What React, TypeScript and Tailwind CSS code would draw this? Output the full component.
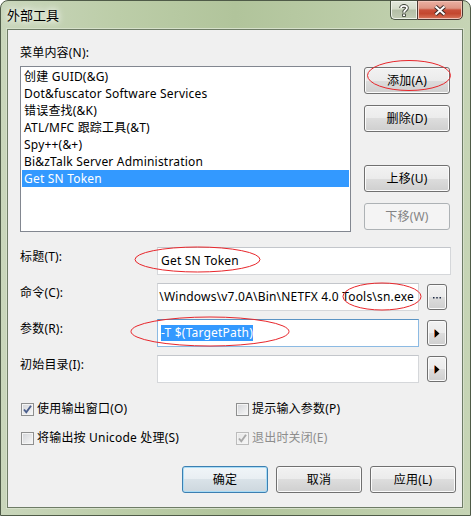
import React from "react";

const menuItems = [
  "创建 GUID(&G)",
  "Dot&fuscator Software Services",
  "错误查找(&K)",
  "ATL/MFC 跟踪工具(&T)",
  "Spy++(&+)",
  "Bi&zTalk Server Administration",
  "Get SN Token",
];

function Btn({
  children,
  className = "",
  disabled = false,
  isDefault = false,
}: {
  children: React.ReactNode;
  className?: string;
  disabled?: boolean;
  isDefault?: boolean;
}) {
  let look =
    "border-[#707070] bg-[linear-gradient(#f2f2f2_0%,#ebebeb_50%,#dddddd_50%,#cfcfcf_100%)] shadow-[inset_0_0_0_1px_#fbfbfb] text-black";
  if (disabled)
    look = "border-[#adb2b5] bg-[#f4f4f4] text-[#838383]";
  if (isDefault)
    look =
      "border-[#3c7fb1] bg-[linear-gradient(#f0f5f8_0%,#e8eef2_50%,#d9e2e8_50%,#cdd7de_100%)] shadow-[inset_0_0_0_1px_#a9dcf6] text-black";
  return (
    <div
      className={`flex h-[27px] w-[86px] items-center justify-center rounded-[3px] border ${look} ${className}`}
    >
      {children}
    </div>
  );
}

function SmallBtn({ children }: { children: React.ReactNode }) {
  return (
    <div className="ml-[8px] mt-[1px] flex h-[26px] w-[20px] items-center justify-center rounded-[3px] border border-[#707070] bg-[linear-gradient(#f2f2f2_0%,#ebebeb_50%,#dddddd_50%,#cfcfcf_100%)] shadow-[inset_0_0_0_1px_#fbfbfb]">
      {children}
    </div>
  );
}

function Arrow() {
  return (
    <svg width="6" height="9" viewBox="0 0 6 9">
      <path d="M1 0.5 L5.5 4.5 L1 8.5 Z" fill="#000" />
      <path d="M0.5 0.5 L0.5 8.5" stroke="#c8642a" strokeWidth="1" />
    </svg>
  );
}

function Row({ label, children }: { label: string; children: React.ReactNode }) {
  return (
    <div className="flex h-[28px] items-start">
      <div className="w-[137px] pt-[2px] whitespace-nowrap">{label}</div>
      {children}
    </div>
  );
}

function CheckBox({ checked = false, disabled = false }: { checked?: boolean; disabled?: boolean }) {
  return (
    <span
      className={`relative flex h-[13px] w-[13px] shrink-0 items-center justify-center border ${
        disabled
          ? "border-[#bcbcbc] bg-[linear-gradient(135deg,#e6e6e6,#f7f7f7)]"
          : "border-[#8e8f8f] bg-[linear-gradient(135deg,#d2d4d8,#f8f8f8)]"
      } shadow-[inset_0_0_0_1px_#f4f4f4]`}
    >
      {checked && (
        <svg width="11" height="11" viewBox="0 0 11 11">
          <path
            d="M2 5.5 L4.3 8.3 L9 1.8"
            fill="none"
            stroke={disabled ? "#a8a8a8" : "#4a5e8c"}
            strokeWidth="1.9"
          />
        </svg>
      )}
    </span>
  );
}

export default function App() {
  return (
    <div className="relative h-[516px] w-[471px] overflow-hidden bg-white font-['Noto_Sans','Noto_Sans_CJK_SC',sans-serif] text-[12px] leading-[16px] tracking-[0.2px] text-black">
      <div className="flex h-full flex-col rounded-t-[8px] border border-[#4f5b48] bg-[linear-gradient(90deg,#c9d6bb_0%,#bccda8_25%,#b1c49b_50%,#bbcca7_75%,#c6d4b5_100%)]">
        {/* title bar */}
        <div className="flex h-[28px] shrink-0">
          <div className="pl-[6px] pt-[6px] text-[13px] leading-[16px] tracking-normal [text-shadow:0_0_6px_#ffffff,0_0_10px_#ffffff]">
            外部工具
          </div>
          <div className="-mt-[1px] ml-auto mr-[7px] flex h-[20px]">
            <div className="flex h-full w-[27px] items-center justify-center rounded-bl-[5px] border border-r-0 border-[#4a5444] bg-[linear-gradient(#e3e8dd_0%,#d3dbc9_45%,#b4bfa6_50%,#c3ccb5_100%)] shadow-[inset_0_0_0_1px_#eef2e9]">
              <svg width="10" height="13" viewBox="0 0 10 13">
                <path
                  d="M2 4 C2 1.2 8 1.2 8 4 C8 6 5 6 5 8.5"
                  fill="none"
                  stroke="#3a3f36"
                  strokeWidth="3.6"
                />
                <path
                  d="M2 4 C2 1.2 8 1.2 8 4 C8 6 5 6 5 8.5"
                  fill="none"
                  stroke="#ffffff"
                  strokeWidth="1.8"
                />
                <rect x="3.2" y="9.6" width="3.6" height="3.2" fill="#3a3f36" />
                <rect x="4" y="10.4" width="2" height="1.6" fill="#ffffff" />
              </svg>
            </div>
            <div className="flex h-full w-[46px] items-center justify-center rounded-br-[5px] border border-[#4a3a34] bg-[linear-gradient(#eab0a3_0%,#de9584_40%,#c9503a_50%,#c4472f_70%,#d9775d_100%)] shadow-[inset_0_0_0_1px_#f2c2b6]">
              <svg width="14" height="11" viewBox="0 0 14 11">
                <path d="M2.5 1.5 L11.5 9.5 M11.5 1.5 L2.5 9.5" stroke="#3b2b28" strokeWidth="4" />
                <path d="M2.5 1.5 L11.5 9.5 M11.5 1.5 L2.5 9.5" stroke="#ffffff" strokeWidth="2" />
              </svg>
            </div>
          </div>
        </div>

        {/* client area */}
        <div className="mb-[7px] ml-[6px] mr-[7px] flex flex-1 flex-col border border-[#6e7c66] bg-[#f0f0f0] pl-[12px] shadow-[0_0_0_1px_#d6e0ca]">
          <div className="mt-[15px] h-[16px]">菜单内容(N):</div>

          <div className="mt-[5px] flex items-start">
            <div className="h-[166px] w-[331px] border border-[#828790] bg-white p-[1px]">
              {menuItems.map((t, i) => (
                <div
                  key={i}
                  className={`h-[17px] whitespace-nowrap pl-[2px] leading-[17px] ${
                    i === 6 ? "bg-[#3399ff] text-white" : ""
                  }`}
                >
                  {t}
                </div>
              ))}
            </div>
            <div className="ml-[13px] mt-[1px] flex flex-col">
              <Btn>添加(A)</Btn>
              <Btn className="mt-[11px]">删除(D)</Btn>
              <Btn className="mt-[33px]">上移(U)</Btn>
              <Btn className="mt-[11px]" disabled>
                下移(W)
              </Btn>
            </div>
          </div>

          <div className="mt-[15px] flex flex-col gap-[8px]">
            <Row label="标题(T):">
              <div className="flex h-[28px] w-[294px] items-center border border-[#d5d7da] border-t-[#c3c6cb] bg-white pl-[3px]">
                Get SN Token
              </div>
            </Row>
            <Row label="命令(C):">
              <div className="flex h-[28px] w-[262px] items-center justify-end overflow-hidden whitespace-nowrap border border-[#d5d7da] border-t-[#c3c6cb] bg-white pr-[4px]">
                \Windows\v7.0A\Bin\NETFX 4.0 Tools\sn.exe
              </div>
              <SmallBtn>
                <svg width="10" height="6" viewBox="0 0 10 6">
                  <rect x="1" y="3" width="1.5" height="1.5" fill="#1d2a44" />
                  <rect x="4.25" y="3" width="1.5" height="1.5" fill="#1d2a44" />
                  <rect x="7.5" y="3" width="1.5" height="1.5" fill="#1d2a44" />
                </svg>
              </SmallBtn>
            </Row>
            <Row label="参数(R):">
              <div className="flex h-[28px] w-[262px] items-center border border-[#8cbae3] border-t-[#5b94c4] bg-white pl-[3px]">
                <span className="bg-[#3399ff] text-white">-T $(TargetPath)</span>
              </div>
              <SmallBtn>
                <Arrow />
              </SmallBtn>
            </Row>
            <Row label="初始目录(I):">
              <div className="h-[28px] w-[262px] border border-[#d5d7da] border-t-[#c3c6cb] bg-white" />
              <SmallBtn>
                <Arrow />
              </SmallBtn>
            </Row>
          </div>

          <div className="mt-[18px] grid grid-cols-[215px_1fr] gap-y-[13px] pl-[1px]">
            <label className="flex h-[16px] items-center gap-[3px]">
              <CheckBox checked />
              <span>使用输出窗口(O)</span>
            </label>
            <label className="flex h-[16px] items-center gap-[3px]">
              <CheckBox />
              <span>提示输入参数(P)</span>
            </label>
            <label className="flex h-[16px] items-center gap-[3px]">
              <CheckBox />
              <span>将输出按 Unicode 处理(S)</span>
            </label>
            <label className="flex h-[16px] items-center gap-[3px] text-[#8d8d8d]">
              <CheckBox checked disabled />
              <span>退出时关闭(E)</span>
            </label>
          </div>

          <div className="mr-[6px] mt-[20px] flex justify-end gap-[8px]">
            <Btn isDefault>确定</Btn>
            <Btn>取消</Btn>
            <Btn>应用(L)</Btn>
          </div>
        </div>
      </div>

      {/* red annotation ellipses */}
      <svg
        className="pointer-events-none absolute left-0 top-0"
        width="471"
        height="516"
        viewBox="0 0 471 516"
      >
        <g fill="none" stroke="#e8262b" strokeWidth="1">
          <ellipse cx="409" cy="75.5" rx="41.5" ry="15" />
          <ellipse cx="197.5" cy="259.5" rx="62.5" ry="12.5" />
          <ellipse cx="382" cy="296.5" rx="39" ry="13.5" />
          <ellipse cx="210" cy="331.5" rx="79" ry="14.5" />
        </g>
      </svg>
    </div>
  );
}
